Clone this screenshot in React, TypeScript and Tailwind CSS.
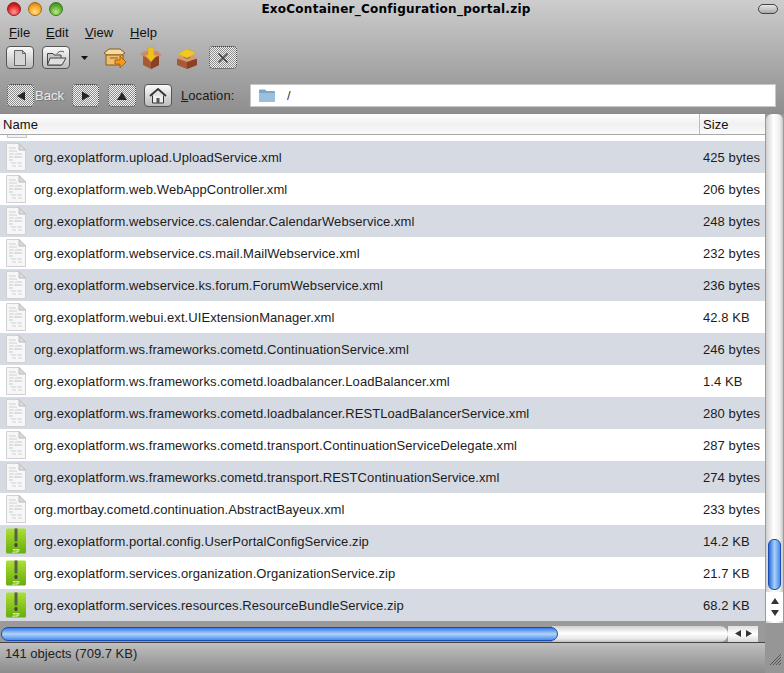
import React from "react";

const rows: [string, string, "xml" | "zip"][] = [
  ["org.exoplatform.upload.UploadService.xml", "425 bytes", "xml"],
  ["org.exoplatform.web.WebAppController.xml", "206 bytes", "xml"],
  ["org.exoplatform.webservice.cs.calendar.CalendarWebservice.xml", "248 bytes", "xml"],
  ["org.exoplatform.webservice.cs.mail.MailWebservice.xml", "232 bytes", "xml"],
  ["org.exoplatform.webservice.ks.forum.ForumWebservice.xml", "236 bytes", "xml"],
  ["org.exoplatform.webui.ext.UIExtensionManager.xml", "42.8 KB", "xml"],
  ["org.exoplatform.ws.frameworks.cometd.ContinuationService.xml", "246 bytes", "xml"],
  ["org.exoplatform.ws.frameworks.cometd.loadbalancer.LoadBalancer.xml", "1.4 KB", "xml"],
  ["org.exoplatform.ws.frameworks.cometd.loadbalancer.RESTLoadBalancerService.xml", "280 bytes", "xml"],
  ["org.exoplatform.ws.frameworks.cometd.transport.ContinuationServiceDelegate.xml", "287 bytes", "xml"],
  ["org.exoplatform.ws.frameworks.cometd.transport.RESTContinuationService.xml", "274 bytes", "xml"],
  ["org.mortbay.cometd.continuation.AbstractBayeux.xml", "233 bytes", "xml"],
  ["org.exoplatform.portal.config.UserPortalConfigService.zip", "14.2 KB", "zip"],
  ["org.exoplatform.services.organization.OrganizationService.zip", "21.7 KB", "zip"],
  ["org.exoplatform.services.resources.ResourceBundleService.zip", "68.2 KB", "zip"],
];

function XmlIcon() {
  return (
    <svg width="22" height="30" viewBox="0 0 22 30" className="block">
      <path d="M1.5 1.5H14L20.5 8V28.5H1.5Z" fill="#f7f7f7" stroke="#d0d0d0" />
      <path d="M14 1.5V8H20.5Z" fill="#dcdcdc" stroke="#bcbcbc" />
      <path d="M4 6h7M4 9h8" stroke="#cfcfcf" />
      <path d="M4 12h5" stroke="#d8c8c0" />
      <path d="M10 12h7" stroke="#c4cdd8" />
      <path d="M4 15h4" stroke="#e0b8b8" />
      <path d="M9 15h8" stroke="#b8c6da" />
      <path d="M4 18h4" stroke="#bcd4bc" />
      <path d="M6 21h5" stroke="#c4d0dc" />
      <path d="M12 21h5M7 24h4" stroke="#d0d0d4" />
      <path d="M13 24h4" stroke="#c8d8c8" />
    </svg>
  );
}

function ZipIcon() {
  return (
    <svg width="22" height="30" viewBox="0 0 22 30" className="block">
      <defs>
        <linearGradient id="zg" x1="0" y1="0" x2="0" y2="1">
          <stop offset="0" stopColor="#aee034" />
          <stop offset="1" stopColor="#68ac0e" />
        </linearGradient>
      </defs>
      <rect x="1" y="2.5" width="20" height="25" rx="1.5" fill="url(#zg)" />
      <rect x="9.5" y="2.5" width="3" height="13" fill="#55624a" />
      <rect x="9.5" y="17" width="3" height="4" rx="1.2" fill="#3c4a30" />
      <text x="11" y="26.5" textAnchor="middle" fontSize="4.5" fontWeight="700" fill="#e8f8c0" fontFamily="Liberation Sans">ZIP</text>
    </svg>
  );
}

function Btn({ children, off, w = "w-[28px]" }: { children: React.ReactNode; off?: boolean; w?: string }) {
  return (
    <div
      className={
        off
          ? `${w} h-[23px] rounded-[4px] flex items-center justify-center border border-dotted border-[#444] bg-[repeating-conic-gradient(#8c8c8c_0_25%,#f2f2f2_0_50%)] bg-[length:2px_2px]`
          : `${w} h-[23px] rounded-[4px] flex items-center justify-center border border-[#555] bg-gradient-to-b from-[#fafafa] to-[#bcbcbc]`
      }
    >
      {children}
    </div>
  );
}

function Box({ kind }: { kind: "open" | "add" | "extract" }) {
  if (kind === "open")
    return (
      <svg width="24" height="24" viewBox="0 0 24 24">
        <path d="M1 7L6 3H17L22 7L19 9H4Z" fill="#f4dca0" stroke="#8a5a18" />
        <path d="M3 9H20V19H3Z" fill="#eebd70" stroke="#8a5a18" />
        <path d="M7 12H15" stroke="#8a5a18" />
        <path d="M12 14H17V10L23 16L17 22V18H12Z" fill="#f59a1c" stroke="#b06008" />
      </svg>
    );
  if (kind === "add")
    return (
      <svg width="24" height="24" viewBox="0 0 24 24">
        <path d="M1 8L6 5H18L23 9L19 11H5Z" fill="#d08a68" />
        <path d="M4 10L12 13L20 10V19L12 23L4 19Z" fill="#a85a38" />
        <path d="M12 13L20 10V19L12 23Z" fill="#8a4026" />
        <path d="M9 1H15V9H18L12 16L6 9H9Z" fill="#f0c020" stroke="#c89810" strokeWidth="0.5" />
      </svg>
    );
  return (
    <svg width="24" height="24" viewBox="0 0 24 24">
      <path d="M2 13L12 10L22 13V19L12 23L2 19Z" fill="#a85a38" />
      <path d="M12 15L22 13V19L12 23Z" fill="#8a4026" />
      <path d="M1 12L6 10L12 13L18 10L23 12L12 16Z" fill="#d89870" />
      <path d="M3 8L12 3L21 7L12 12Z" fill="#f2ca1e" stroke="#d8a810" strokeWidth="0.5" />
    </svg>
  );
}

const Arrow = ({ d }: { d: string }) => (
  <svg width="14" height="14" viewBox="0 0 14 14"><path d={d} fill="#262626" /></svg>
);

export default function App() {
  return (
    <div className="w-[784px] h-[673px] overflow-hidden relative flex flex-col bg-[#9a9a9a] text-[13px] text-[#111] font-['Liberation_Sans',Arial,sans-serif] leading-none">
      <div className="h-[114px] bg-gradient-to-b from-[#cdcdcd] to-[#8e8e8e] flex flex-col border-b border-[#8a8a8a] shrink-0">
        {/* title */}
        <div className="h-[19px] relative flex items-center justify-center pl-[8px] pb-[2px]">
          <div className="absolute left-[7px] top-[2px] flex gap-[7px]">
            <div className="w-[14px] h-[14px] rounded-full border border-[#8a2020] bg-[radial-gradient(circle_at_50%_75%,#ff9a9a,#e02020_60%,#a01010)]" />
            <div className="w-[14px] h-[14px] rounded-full border border-[#a06a10] bg-[radial-gradient(circle_at_50%_75%,#ffe08a,#f5a020_60%,#c06a10)]" />
            <div className="w-[14px] h-[14px] rounded-full border border-[#3a7a20] bg-[radial-gradient(circle_at_50%_75%,#b8ec80,#58a830_60%,#307818)]" />
          </div>
          <span className="font-bold text-black text-[12px] tracking-[0.25px] font-['DejaVu_Sans',sans-serif]">ExoContainer_Configuration_portal.zip</span>
          <div className="absolute left-[758px] top-[4px] w-[20px] h-[10px] rounded-full border border-[#444] bg-gradient-to-b from-[#e8e8e8] to-[#a8a8a8]" />
        </div>
        {/* menu */}
        <div className="h-[26px] flex items-center pl-[9px] pt-[1px] tracking-[0.07px]">
          <span className="w-[37px]"><u>F</u>ile</span>
          <span className="w-[39px]"><u>E</u>dit</span>
          <span className="w-[45px]"><u>V</u>iew</span>
          <span><u>H</u>elp</span>
        </div>
        {/* toolbar */}
        <div className="h-[25px] flex items-center pl-[6px]">
          <Btn>
            <svg width="14" height="16" viewBox="0 0 14 16"><path d="M1.5.5H9.5L12.5 3.5V15.5H1.5Z" fill="#d4d4d4" stroke="#666" /><path d="M9.5.5V3.5H12.5" fill="none" stroke="#666" /></svg>
          </Btn>
          <div className="w-[8px]" />
          <Btn>
            <svg width="21" height="16" viewBox="0 0 21 16"><path d="M1.5 3.5H7L8 5H15V15H1.5Z" fill="#c8c8c8" stroke="#444" /><path d="M4 8H20L16 15H1.5Z" fill="#dedede" stroke="#444" /><path d="M11 4C12 1.5 15 0.5 18 2" fill="none" stroke="#555" /></svg>
          </Btn>
          <svg width="9" height="6" viewBox="0 0 9 6" className="ml-[10px] mr-[14px]"><path d="M1 1H8L4.5 5Z" fill="#111" /></svg>
          <Box kind="open" />
          <div className="w-[12px]" />
          <Box kind="add" />
          <div className="w-[12px]" />
          <Box kind="extract" />
          <div className="w-[10px]" />
          <Btn off>
            <div className="flex items-center justify-center w-[14px] h-[14px]">
              <svg width="14" height="14" viewBox="0 0 14 14"><path d="M2.5 2.5L11.5 11.5M11.5 2.5L2.5 11.5" stroke="#444" strokeWidth="1.6" /></svg>
            </div>
          </Btn>
        </div>
        {/* location */}
        <div className="flex items-center pl-[7px] pr-[8px] mt-[14px] h-[23px]">
          <Btn off w="w-[27px]"><Arrow d="M11 2.5V11.5L3 7Z" /></Btn>
          <span className="w-[38px] pl-[1px] text-[#eaeaea] [text-shadow:1px_1px_0_#777]">Back</span>
          <Btn off w="w-[27px]"><Arrow d="M3 2.5V11.5L11 7Z" /></Btn>
          <div className="w-[9px]" />
          <Btn off><Arrow d="M7 3L12 11H2Z" /></Btn>
          <div className="w-[8px]" />
          <Btn>
            <svg width="18" height="16" viewBox="0 0 18 16"><path d="M1 8L9 1L17 8" fill="none" stroke="#333" strokeWidth="1.8" /><path d="M3.5 7.5V15H14.5V7.5" fill="#eee" stroke="#333" /><rect x="7.5" y="10" width="3" height="5" fill="#555" /></svg>
          </Btn>
          <span className="ml-[9px] w-[69px] text-[#1a1a1a] tracking-[0.07px]"><u>L</u>ocation:</span>
          <div className="flex-1 h-[23px] bg-white border border-[#c8c8c8] flex items-center pl-[8px]">
            <svg width="16" height="13" viewBox="0 0 16 13"><path d="M0 1.5Q0 .5 1 .5H6L7.5 2H15Q16 2 16 3V12Q16 13 15 13H1Q0 13 0 12Z" fill="#7ea6c8" /><path d="M0 4H16V12Q16 13 15 13H1Q0 13 0 12Z" fill="#9cc0dc" /></svg>
            <span className="ml-[12px] text-[#333]">/</span>
          </div>
        </div>
      </div>

      <div className="h-[509px] flex shrink-0">
        {/* list */}
        <div className="w-[765px] flex flex-col tracking-[0.07px]">
          <div className="h-[21px] flex bg-gradient-to-b from-[#ffffff] via-[#f0f0f0] to-[#fafafa] border-b border-[#a8a8a8] shrink-0">
            <div className="w-[700px] pl-[3px] flex items-center border-r border-[#bcbcbc]">Name</div>
            <div className="flex-1 pl-[3px] flex items-center">Size</div>
          </div>
          <div className="h-[6px] bg-white shrink-0 pl-[7px]">
            <div className="w-[20px] h-[3px] border-b border-x border-[#c8c8c8] bg-[#f2f2f2]" />
          </div>
          {rows.map(([name, size, kind], i) => (
            <div key={name} className={`h-[32px] shrink-0 flex items-center text-[#1c1c1c] ${i % 2 === 0 ? "bg-[#d6dae3]" : "bg-white"}`}>
              <div className="w-[34px] pl-[5px] shrink-0"><div className="w-[22px]">{kind === "xml" ? <XmlIcon /> : <ZipIcon />}</div></div>
              <div className="w-[669px] shrink-0">{name}</div>
              <div className="flex-1 whitespace-nowrap">{size}</div>
            </div>
          ))}
        </div>
        {/* vertical scrollbar */}
        <div className="w-[17px] flex flex-col bg-[linear-gradient(90deg,#d0d0d0,#ffffff_45%,#eeeeee_80%,#c8c8c8)] rounded-t-[6px] ml-[1px]">
          <div className="h-[425px] shrink-0" />
          <div className="w-[13px] h-[51px] mx-auto rounded-[6px] border border-[#1a4cb0] bg-[linear-gradient(90deg,#2a6ae0,#a8d0f8_50%,#4a8cf0)] shrink-0" />
          <div className="h-[29px] flex flex-col items-center justify-center gap-[6px] bg-white mt-[2px]">
            <svg width="8" height="6" viewBox="0 0 8 6"><path d="M4 0L8 6H0Z" fill="#333" /></svg>
            <svg width="8" height="6" viewBox="0 0 8 6"><path d="M0 0H8L4 6Z" fill="#333" /></svg>
          </div>
        </div>
      </div>

      {/* bottom: scrollbar + status, resize column */}
      <div className="flex-1 flex min-h-0">
        <div className="w-[765px] flex flex-col">
          <div className="h-[19px] flex items-center pl-[1px] pt-[2px] shrink-0">
            <div className="w-[557px] h-[14px] rounded-[7px] border border-[#1a4cb0] bg-[linear-gradient(180deg,#3a7ae8,#b0d4fa_50%,#4a8cf0)] relative z-10" />
            <div className="w-[176px] h-[16px] -ml-[6px] rounded-r-[8px] bg-[linear-gradient(180deg,#cfcfcf,#ffffff_45%,#e8e8e8_80%,#c0c0c0)]" />
            <div className="w-[30px] h-[16px] flex items-center justify-center gap-[5px] bg-gradient-to-b from-[#e0e0e0] via-white to-[#d8d8d8]">
              <svg width="6" height="7" viewBox="0 0 6 7"><path d="M6 0V7L0 3.5Z" fill="#333" /></svg>
              <svg width="6" height="7" viewBox="0 0 6 7"><path d="M0 0V7L6 3.5Z" fill="#333" /></svg>
            </div>
          </div>
          <div className="flex-1 border-t border-[#444] bg-gradient-to-b from-[#c0c0c0] to-[#8c8c8c] pl-[5px] pt-[4px] text-[#222]">
            141 objects (709.7 KB)
          </div>
        </div>
        <div className="flex-1 relative bg-[#969696]">
          <svg width="13" height="13" viewBox="0 0 13 13" className="absolute left-[4px] top-[30px]"><path d="M12 1L1 12M12 4L4 12M12 7L7 12M12 10L10 12" stroke="#555" /></svg>
        </div>
      </div>
    </div>
  );
}
